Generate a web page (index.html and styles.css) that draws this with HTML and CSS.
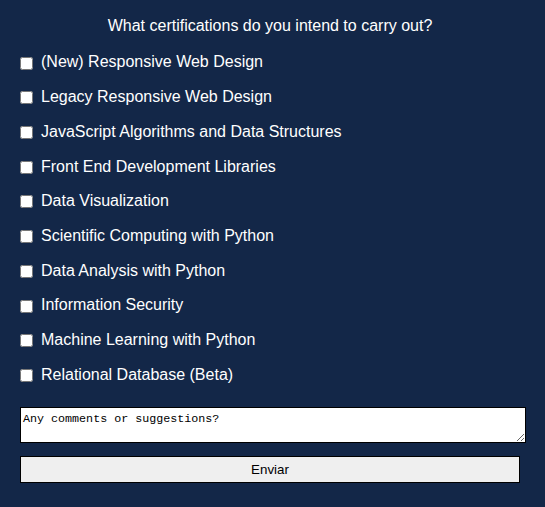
FILE: index.html
```html
<!DOCTYPE html>
<html lang="en">
<head>
<meta charset="utf-8">
<title>Survey</title>
<link rel="stylesheet" href="styles.css">
</head>
<body>
<form class="survey">
  <p class="question">What certifications do you intend to carry out?</p>
  <div class="options">
    <label class="option"><input type="checkbox" class="check">(New) Responsive Web Design</label>
    <label class="option"><input type="checkbox" class="check">Legacy Responsive Web Design</label>
    <label class="option"><input type="checkbox" class="check">JavaScript Algorithms and Data Structures</label>
    <label class="option"><input type="checkbox" class="check">Front End Development Libraries</label>
    <label class="option"><input type="checkbox" class="check">Data Visualization</label>
    <label class="option"><input type="checkbox" class="check">Scientific Computing with Python</label>
    <label class="option"><input type="checkbox" class="check">Data Analysis with Python</label>
    <label class="option"><input type="checkbox" class="check">Information Security</label>
    <label class="option"><input type="checkbox" class="check">Machine Learning with Python</label>
    <label class="option"><input type="checkbox" class="check">Relational Database (Beta)</label>
  </div>
  <textarea class="comments" placeholder="Any comments or suggestions?"></textarea>
  <button type="submit" class="submit">Enviar</button>
</form>
</body>
</html>
```
FILE: styles.css
```css
html, body {
  margin: 0;
  padding: 0;
  background: #132748;
}

body {
  font-family: "Liberation Sans", Arial, sans-serif;
  color: #ffffff;
}

.survey {
  padding: 17px 25px 0 20px;
  display: flex;
  flex-direction: column;
}

.question {
  margin: 0 0 18px 0;
  font-size: 16px;
  line-height: 18.4px;
  text-align: center;
}

.options {
  display: flex;
  flex-direction: column;
  gap: 16px;
}

.option {
  display: block;
  font-size: 16px;
  line-height: 18.7px;
}

.check {
  width: 13px;
  height: 13px;
  margin: 0 8px 0 0;
  vertical-align: middle;
}

.comments {
  display: block;
  margin: 23px 0 0 0;
  width: 500px;
  height: 28px;
  padding: 4px 2px 2px 2px;
  border: 1px solid #000;
  box-sizing: content-box;
  font-family: "Liberation Mono", "DejaVu Sans Mono", monospace;
  font-size: 11.7px;
  line-height: 14px;
  resize: vertical;
  background: #fff;
}

.comments::placeholder {
  color: #000;
  opacity: 1;
}

.submit {
  display: block;
  margin: 13px 0 0 0;
  width: 500px;
  height: 27px;
  box-sizing: border-box;
  border: 1px solid #000;
  background: #efefef;
  color: #000;
  font-family: "Liberation Sans", Arial, sans-serif;
  font-size: 13.33px;
  padding: 0;
}
```
